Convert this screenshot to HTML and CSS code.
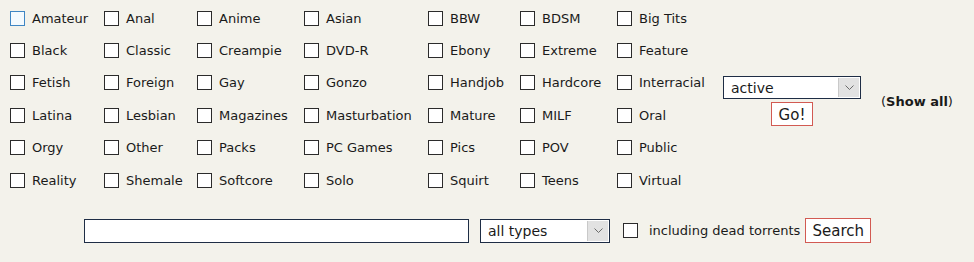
FILE: index.html
```html
<!DOCTYPE html>
<html>
<head>
<meta charset="utf-8">
<link rel="stylesheet" href="styles.css">
</head>
<body>
<div class="page">
  <form class="filter">
    <div class="cats">
      <label class="cat"><input type="checkbox" class="cb focus"><span>Amateur</span></label>
      <label class="cat"><input type="checkbox" class="cb"><span>Anal</span></label>
      <label class="cat"><input type="checkbox" class="cb"><span>Anime</span></label>
      <label class="cat"><input type="checkbox" class="cb"><span>Asian</span></label>
      <label class="cat"><input type="checkbox" class="cb"><span>BBW</span></label>
      <label class="cat"><input type="checkbox" class="cb"><span>BDSM</span></label>
      <label class="cat"><input type="checkbox" class="cb"><span>Big Tits</span></label>

      <label class="cat"><input type="checkbox" class="cb"><span>Black</span></label>
      <label class="cat"><input type="checkbox" class="cb"><span>Classic</span></label>
      <label class="cat"><input type="checkbox" class="cb"><span>Creampie</span></label>
      <label class="cat"><input type="checkbox" class="cb"><span>DVD-R</span></label>
      <label class="cat"><input type="checkbox" class="cb"><span>Ebony</span></label>
      <label class="cat"><input type="checkbox" class="cb"><span>Extreme</span></label>
      <label class="cat"><input type="checkbox" class="cb"><span>Feature</span></label>

      <label class="cat"><input type="checkbox" class="cb"><span>Fetish</span></label>
      <label class="cat"><input type="checkbox" class="cb"><span>Foreign</span></label>
      <label class="cat"><input type="checkbox" class="cb"><span>Gay</span></label>
      <label class="cat"><input type="checkbox" class="cb"><span>Gonzo</span></label>
      <label class="cat"><input type="checkbox" class="cb"><span>Handjob</span></label>
      <label class="cat"><input type="checkbox" class="cb"><span>Hardcore</span></label>
      <label class="cat"><input type="checkbox" class="cb"><span>Interracial</span></label>

      <label class="cat"><input type="checkbox" class="cb"><span>Latina</span></label>
      <label class="cat"><input type="checkbox" class="cb"><span>Lesbian</span></label>
      <label class="cat"><input type="checkbox" class="cb"><span>Magazines</span></label>
      <label class="cat"><input type="checkbox" class="cb"><span>Masturbation</span></label>
      <label class="cat"><input type="checkbox" class="cb"><span>Mature</span></label>
      <label class="cat"><input type="checkbox" class="cb"><span>MILF</span></label>
      <label class="cat"><input type="checkbox" class="cb"><span>Oral</span></label>

      <label class="cat"><input type="checkbox" class="cb"><span>Orgy</span></label>
      <label class="cat"><input type="checkbox" class="cb"><span>Other</span></label>
      <label class="cat"><input type="checkbox" class="cb"><span>Packs</span></label>
      <label class="cat"><input type="checkbox" class="cb"><span>PC Games</span></label>
      <label class="cat"><input type="checkbox" class="cb"><span>Pics</span></label>
      <label class="cat"><input type="checkbox" class="cb"><span>POV</span></label>
      <label class="cat"><input type="checkbox" class="cb"><span>Public</span></label>

      <label class="cat"><input type="checkbox" class="cb"><span>Reality</span></label>
      <label class="cat"><input type="checkbox" class="cb"><span>Shemale</span></label>
      <label class="cat"><input type="checkbox" class="cb"><span>Softcore</span></label>
      <label class="cat"><input type="checkbox" class="cb"><span>Solo</span></label>
      <label class="cat"><input type="checkbox" class="cb"><span>Squirt</span></label>
      <label class="cat"><input type="checkbox" class="cb"><span>Teens</span></label>
      <label class="cat"><input type="checkbox" class="cb"><span>Virtual</span></label>
    </div>
    <div class="state">
      <div class="selwrap sel-state">
        <select class="sel"><option>active</option></select>
        <span class="arrow"><svg width="9" height="6" viewBox="0 0 9 6"><path d="M0.5 0.5 L4.5 4.5 L8.5 0.5" fill="none" stroke="#6a6a6a" stroke-width="1"/></svg></span>
      </div>
      <button type="button" class="btn go">Go!</button>
    </div>
    <div class="showall">(<b>Show all</b>)</div>
  </form>
  <form class="search">
    <input type="text" class="q">
    <div class="selwrap sel-type">
      <select class="sel"><option>all types</option></select>
      <span class="arrow"><svg width="9" height="6" viewBox="0 0 9 6"><path d="M0.5 0.5 L4.5 4.5 L8.5 0.5" fill="none" stroke="#6a6a6a" stroke-width="1"/></svg></span>
    </div>
    <label class="dead"><input type="checkbox" class="cb"><span>including dead torrents</span></label>
    <button type="button" class="btn searchbtn">Search</button>
  </form>
</div>
</body>
</html>
```
FILE: styles.css
```css
html, body {
  margin: 0;
  padding: 0;
  background: #f3f2eb;
}
body {
  font-family: "DejaVu Sans", Verdana, sans-serif;
  font-size: 13px;
  color: #1a1a1a;
}
.page {
  padding: 2px 0 0 0;
}
.filter {
  display: flex;
  align-items: center;
  margin: 0;
}
.cats {
  display: grid;
  grid-template-columns: 94px 93px 107px 124px 92px 97px 106px;
  grid-auto-rows: 32.4px;
  padding-left: 10px;
}
.cat {
  display: flex;
  align-items: center;
  gap: 7px;
  white-space: nowrap;
}
.cb {
  appearance: none;
  -webkit-appearance: none;
  width: 15px;
  height: 15px;
  margin: 0;
  border: 1px solid #2b2b2b;
  background: #ffffff;
  flex: none;
}
.cb.focus {
  border-color: #3f86c4;
  background: #f4fafe;
}
.state {
  display: flex;
  flex-direction: column;
  align-items: center;
  gap: 3px;
  width: 138px;
  padding-top: 4px;
}
.selwrap {
  position: relative;
}
.sel {
  appearance: none;
  -webkit-appearance: none;
  box-sizing: border-box;
  border: 1px solid #1e2d45;
  background: #ffffff;
  font-family: "DejaVu Sans", Verdana, sans-serif;
  font-size: 14px;
  color: #1a1a1a;
  margin: 0;
  border-radius: 0;
  padding: 1px 0 0 7px;
  display: block;
}
.sel-state .sel {
  width: 138px;
  height: 23px;
}
.sel-type .sel {
  width: 130px;
  height: 24px;
}
.arrow {
  position: absolute;
  top: 2px;
  right: 2px;
  bottom: 2px;
  width: 20px;
  background: #e2e2e2;
  border-left: 1px solid #c9c9c9;
  display: flex;
  align-items: center;
  justify-content: center;
}
.btn {
  font-family: "DejaVu Sans", Verdana, sans-serif;
  font-size: 15px;
  color: #1a1a1a;
  background: #ffffff;
  border: 1px solid #d25a52;
  border-radius: 0;
  margin: 0;
  padding: 1px 0 0 0;
  height: 24px;
}
.go {
  width: 42px;
}
.showall {
  margin-left: 20px;
  padding-top: 4px;
  font-size: 13px;
}
.search {
  display: flex;
  align-items: center;
  margin: 22px 0 0 84px;
}
.q {
  box-sizing: border-box;
  width: 385px;
  height: 24px;
  border: 1px solid #1e2d45;
  background: #ffffff;
  margin: 0 11px 0 0;
  padding: 0;
  border-radius: 0;
}
.dead {
  display: flex;
  align-items: center;
  gap: 11px;
  margin-left: 13px;
}
.searchbtn {
  margin-left: 5px;
  width: 66px;
  height: 25px;
}
```
